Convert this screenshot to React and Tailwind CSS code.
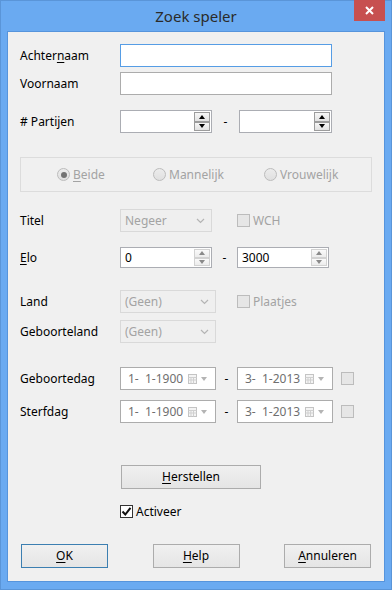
const FONT = { fontFamily: '"Noto Sans", "Open Sans", sans-serif' };

function Arrow({ up, dark }) {
  return (
    <span
      className={
        up
          ? dark
            ? "w-0 h-0 border-l-[3.5px] border-r-[3.5px] border-b-[4px] border-l-transparent border-r-transparent border-b-black"
            : "w-0 h-0 border-l-[3.5px] border-r-[3.5px] border-b-[4px] border-l-transparent border-r-transparent border-b-[#8a8a8a]"
          : dark
          ? "w-0 h-0 border-l-[3.5px] border-r-[3.5px] border-t-[4px] border-l-transparent border-r-transparent border-t-black"
          : "w-0 h-0 border-l-[3.5px] border-r-[3.5px] border-t-[4px] border-l-transparent border-r-transparent border-t-[#8a8a8a]"
      }
    />
  );
}

function Spin({ value, width, dark }) {
  const btn = dark
    ? "flex-1 flex items-center justify-center border border-[#9c9c9c] bg-gradient-to-b from-[#f6f6f6] to-[#e2e2e2]"
    : "flex-1 flex items-center justify-center border border-[#d2d2d2] bg-gradient-to-b from-[#fafafa] to-[#ececec]";
  return (
    <div className={`flex h-full border border-[#abadb3] bg-white ${width}`}>
      <div className="flex-1 flex items-center pl-[4px] text-black">{value}</div>
      <div className="flex flex-col w-[17px] py-[1px] pr-[1px]">
        <div className={btn}>
          <Arrow up dark={dark} />
        </div>
        <div className={btn}>
          <Arrow dark={dark} />
        </div>
      </div>
    </div>
  );
}

function Chevron() {
  return (
    <svg width="9" height="6" viewBox="0 0 9 6" className="shrink-0">
      <polyline points="1,1 4.5,4.5 8,1" fill="none" stroke="#b4b4b4" strokeWidth="1.2" />
    </svg>
  );
}

function Combo({ value, width }) {
  return (
    <div className={`flex items-center h-full border border-[#d9d9d9] bg-[#efefef] pl-[4px] pr-[6px] text-[#a3a3a3] ${width}`}>
      <span className="flex-1">{value}</span>
      <Chevron />
    </div>
  );
}

function Box({ checked, disabled }) {
  if (disabled) {
    return <span className="block w-[13px] h-[13px] shrink-0 border border-[#bcbcbc] bg-[#e6e6e6]" />;
  }
  return (
    <span className="w-[13px] h-[13px] shrink-0 border border-[#333] bg-white flex items-center justify-center">
      {checked && (
        <svg width="11" height="11" viewBox="0 0 11 11">
          <polyline points="1.5,5.5 4.3,8.5 9.5,1.8" fill="none" stroke="#111" strokeWidth="2" />
        </svg>
      )}
    </span>
  );
}

function DateBox({ value }) {
  return (
    <div className="flex items-center h-full w-[96px] border border-[#acacac] bg-white pl-[7px] pr-[8px] text-[#6f6f6f]">
      <span className="flex-1 whitespace-pre">{value}</span>
      <svg width="9" height="10" viewBox="0 0 9 10" className="shrink-0">
        <rect x="0.5" y="0.5" width="8" height="9" fill="#f4f4f4" stroke="#c4c4c4" />
        <path d="M0.5 3.5h8M0.5 6h8M3 3v6.5M5.5 3v6.5" stroke="#d0d0d0" strokeWidth="1" />
      </svg>
      <span className="ml-[4px] w-0 h-0 border-l-[3.5px] border-r-[3.5px] border-t-[4px] border-l-transparent border-r-transparent border-t-[#b4b4b4]" />
    </div>
  );
}

function Radio({ checked, label, width }) {
  return (
    <div className={`flex items-center gap-[3px] text-[#a3a3a3] ${width}`}>
      <span className="w-[13px] h-[13px] rounded-full border border-[#bcbcbc] bg-gradient-to-b from-[#ececec] to-[#e0e0e0] flex items-center justify-center">
        {checked && <span className="w-[6px] h-[6px] rounded-full bg-[#737373]" />}
      </span>
      {label}
    </div>
  );
}

function Button({ children, width, primary }) {
  return (
    <button
      className={`h-[24px] ${width} border ${
        primary ? "border-[#3c7fb1]" : "border-[#acacac]"
      } bg-gradient-to-b from-[#f0f0f0] to-[#e5e5e5] text-black flex items-center justify-center`}
    >
      {children}
    </button>
  );
}

function Label({ children }) {
  return <div className="w-[100px] shrink-0 text-black">{children}</div>;
}

export default function App() {
  return (
    <div
      className="w-[392px] h-[590px] bg-[#6aaaf1] border border-[#5a95d8] flex flex-col text-[12px] leading-none"
      style={FONT}
    >
      {/* Title bar */}
      <div className="h-[30px] flex items-center relative shrink-0">
        <div className="flex-1 text-center text-[15px] text-[#2a2a2a] pt-[1px]">Zoek speler</div>
        <div className="absolute right-[6px] top-[-1px] w-[31px] h-[21px] bg-[#c75050] flex items-center justify-center">
          <svg width="9" height="9" viewBox="0 0 9 9">
            <path d="M1 1l7 7M8 1l-7 7" stroke="white" strokeWidth="2" />
          </svg>
        </div>
      </div>

      {/* Content */}
      <div className="mx-[6px] mb-[7px] flex-1 border border-[#5694dc] bg-[#f0f0f0] flex flex-col pl-[12px]">
        <div className="flex items-center h-[23px] mt-[12px]">
          <Label>
            Achter<span className="underline underline-offset-2">n</span>aam
          </Label>
          <div className="w-[212px] h-full border border-[#569de5] bg-white" />
        </div>
        <div className="flex items-center h-[23px] mt-[5px]">
          <Label>Voornaam</Label>
          <div className="w-[212px] h-full border border-[#acacac] bg-white" />
        </div>
        <div className="flex items-center h-[23px] mt-[15px]">
          <Label># Partijen</Label>
          <Spin width="w-[92px]" value="" dark />
          <span className="w-[27px] text-center text-black">-</span>
          <Spin width="w-[93px]" value="" dark />
        </div>

        {/* Gender group */}
        <div className="flex items-center h-[35px] mt-[24px] w-[352px] border border-[#dcdcdc] pl-[36px]">
          <Radio checked width="w-[96px]" label={<span><span className="underline underline-offset-2">B</span>eide</span>} />
          <Radio width="w-[111px]" label="Mannelijk" />
          <Radio label="Vrouwelijk" />
        </div>

        <div className="flex items-center h-[23px] mt-[17px]">
          <Label>Titel</Label>
          <Combo value="Negeer" width="w-[92px]" />
          <div className="flex items-center gap-[3px] ml-[25px] text-[#a3a3a3]">
            <Box disabled />
            WCH
          </div>
        </div>
        <div className="flex items-center h-[21px] mt-[15px]">
          <Label>
            <span className="underline underline-offset-2">E</span>lo
          </Label>
          <Spin width="w-[92px]" value="0" />
          <span className="w-[25px] text-center text-black">-</span>
          <Spin width="w-[92px]" value="3000" />
        </div>

        <div className="flex items-center h-[23px] mt-[22px]">
          <Label>Land</Label>
          <Combo value="(Geen)" width="w-[96px]" />
          <div className="flex items-center gap-[3px] ml-[21px] text-[#a3a3a3]">
            <Box disabled />
            Plaatjes
          </div>
        </div>
        <div className="flex items-center h-[23px] mt-[7px]">
          <Label>Geboorteland</Label>
          <Combo value="(Geen)" width="w-[96px]" />
        </div>

        <div className="flex items-center h-[23px] mt-[24px]">
          <Label>Geboortedag</Label>
          <DateBox value="1-  1-1900" />
          <span className="w-[21px] text-center text-black">-</span>
          <DateBox value="3-  1-2013" />
          <div className="ml-[8px] flex">
            <Box disabled />
          </div>
        </div>
        <div className="flex items-center h-[23px] mt-[10px]">
          <Label>Sterfdag</Label>
          <DateBox value="1-  1-1900" />
          <span className="w-[21px] text-center text-black">-</span>
          <DateBox value="3-  1-2013" />
          <div className="ml-[8px] flex">
            <Box disabled />
          </div>
        </div>

        <div className="flex mt-[42px] pl-[101px]">
          <Button width="w-[140px]">
            <span className="underline underline-offset-2">H</span>erstellen
          </Button>
        </div>
        <div className="flex items-center gap-[3px] mt-[16px] pl-[100px] h-[13px] text-black">
          <Box checked />
          Activeer
        </div>

        <div className="flex justify-between mt-[26px] pl-[1px] pr-[13px]">
          <Button width="w-[87px]" primary>
            <span className="underline underline-offset-2">O</span>K
          </Button>
          <Button width="w-[87px]">
            <span className="underline underline-offset-2">H</span>elp
          </Button>
          <Button width="w-[87px]">
            <span className="underline underline-offset-2">A</span>nnuleren
          </Button>
        </div>
      </div>
    </div>
  );
}
